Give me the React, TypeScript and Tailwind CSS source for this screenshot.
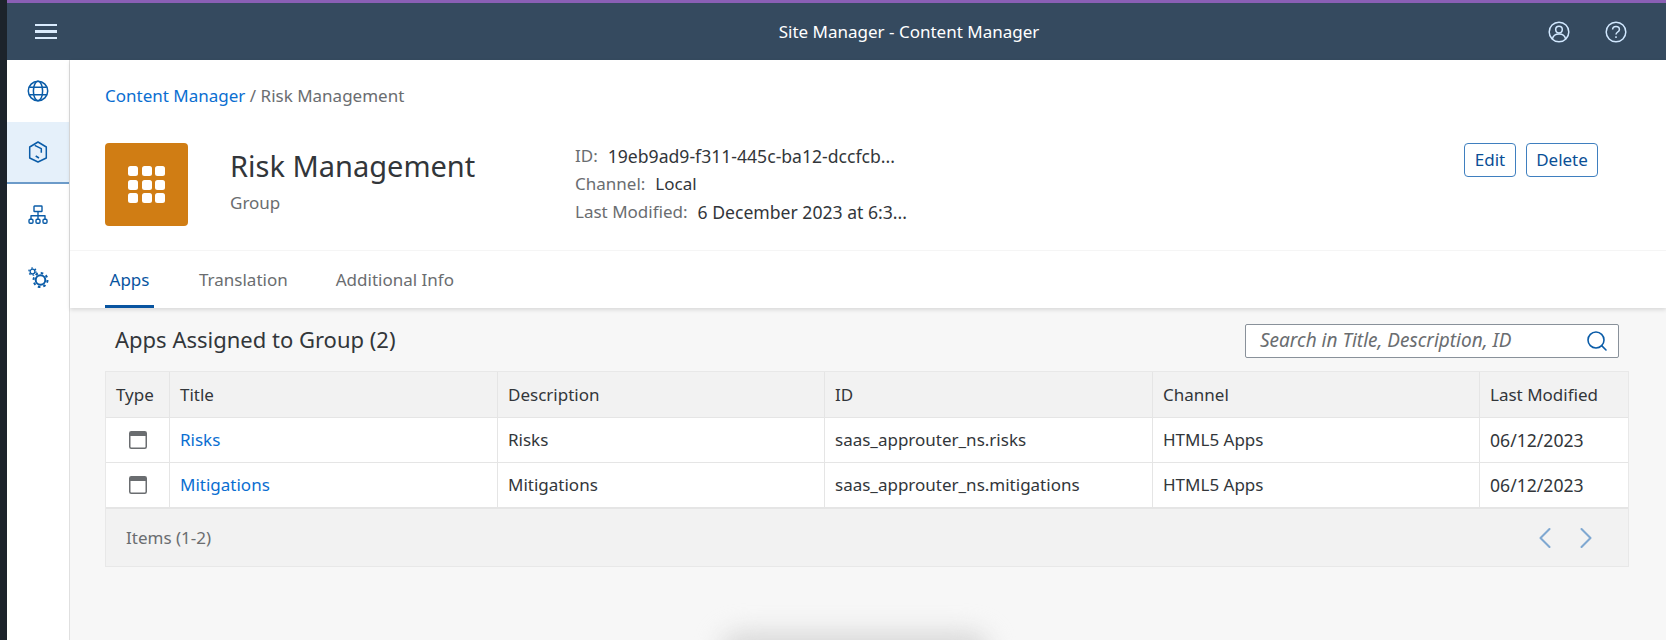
import { Search, ChevronLeft, ChevronRight } from 'lucide-react';

const columns = ['Type', 'Title', 'Description', 'ID', 'Channel', 'Last Modified'];

const apps = [
  { title: 'Risks', description: 'Risks', id: 'saas_approuter_ns.risks', channel: 'HTML5 Apps', modified: '06/12/2023' },
  { title: 'Mitigations', description: 'Mitigations', id: 'saas_approuter_ns.mitigations', channel: 'HTML5 Apps', modified: '06/12/2023' },
];

const gridCols = 'grid grid-cols-[63px_328px_327px_328px_327px_1fr]';

function GlobeIcon() {
  return (
    <svg width="24" height="24" viewBox="0 0 24 24" fill="none" stroke="#0a5ca8" strokeWidth="1.5">
      <circle cx="12" cy="12" r="9.7" />
      <ellipse cx="12" cy="12" rx="4.6" ry="9.7" />
      <path d="M3.2 8.2h17.6M3.2 15.8h17.6" />
    </svg>
  );
}

function CubeIcon() {
  return (
    <svg width="24" height="24" viewBox="0 0 24 24" fill="none" stroke="#0a5ca8" strokeWidth="1.5" strokeLinejoin="round">
      <path d="M12 2l8.3 5v11L12 22l-8.3-4V7z" />
      <path d="M8.7 5.3l6.6 3.4v4M9.7 16l3.3 2" />
    </svg>
  );
}

function HierarchyIcon() {
  return (
    <svg width="20" height="20" viewBox="0 0 20 20" fill="none" stroke="#0a5ca8" strokeWidth="1.4" strokeLinejoin="round">
      <rect x="6" y="1" width="8" height="5.5" rx="0.5" />
      <path d="M10 6.5V14M3 14v-3.2h14V14" />
      <rect x="1" y="14.2" width="4" height="4" rx="1.2" />
      <rect x="8" y="14.2" width="4" height="4" rx="1.2" />
      <rect x="15" y="14.2" width="4" height="4" rx="1.2" />
    </svg>
  );
}

function GearsIcon() {
  return (
    <svg width="24" height="24" viewBox="0 0 24 24" fill="none" stroke="#0a5ca8">
      <circle cx="6.5" cy="6.6" r="2.4" strokeWidth="1.3" />
      <circle cx="6.5" cy="6.6" r="3.6" strokeWidth="1.3" strokeDasharray="1.6 2.2" />
      <circle cx="14.5" cy="15" r="4.8" strokeWidth="2" />
      <circle cx="14.5" cy="15" r="7" strokeWidth="2" strokeDasharray="2.6 2.9" />
    </svg>
  );
}

function WindowIcon() {
  return (
    <svg width="18" height="18" viewBox="0 0 18 18" fill="none">
      <rect x="0.75" y="0.75" width="16.5" height="16.5" rx="1.5" stroke="#6a6d70" strokeWidth="1.5" />
      <rect x="1" y="1" width="16" height="4" fill="#6a6d70" />
    </svg>
  );
}

function UserIcon() {
  return (
    <svg width="22" height="22" viewBox="0 0 22 22" fill="none" stroke="#d1e8ff" strokeWidth="1.5">
      <circle cx="11" cy="11" r="9.8" />
      <circle cx="11" cy="8.6" r="3.3" />
      <path d="M4.4 18c.6-3.2 3-5 6.6-5s6 1.8 6.6 5" />
    </svg>
  );
}

function HelpIcon() {
  return (
    <svg width="22" height="22" viewBox="0 0 22 22" fill="none" stroke="#d1e8ff" strokeWidth="1.5">
      <circle cx="11" cy="11" r="9.8" />
      <path d="M7.6 8.6c0-2 1.5-3.2 3.4-3.2s3.4 1.2 3.4 3c0 2.6-3.4 2.6-3.4 5.2" />
      <path d="M11 15.2v1.8" />
    </svg>
  );
}

export default function App() {
  return (
    <div className="relative flex h-[640px] w-[1666px] overflow-hidden bg-[#f7f7f7] font-['Noto_Sans',sans-serif] text-[17px] text-[#32363a]">
      {/* dark window edge */}
      <div className="w-[7px] shrink-0 bg-[#1c232b]" />

      <div className="flex min-w-0 flex-1 flex-col">
        {/* Shell bar */}
        <header className="flex h-[60px] shrink-0 items-center justify-between border-t-[3px] border-[#8a5fb5] bg-[#354a5f] pr-[39px] pl-[28px] text-white">
          <div className="flex w-[22px] flex-col gap-[4px]">
            <span className="h-[2.5px] bg-[#d9ebfd]" />
            <span className="h-[2.5px] bg-[#d9ebfd]" />
            <span className="h-[2.5px] bg-[#d9ebfd]" />
          </div>
          <div className="ml-[213px] text-[17px]">Site Manager - Content Manager</div>
          <div className="flex items-center gap-[35px]">
            <UserIcon />
            <HelpIcon />
          </div>
        </header>

        <div className="flex min-h-0 flex-1">
          {/* Side nav */}
          <nav className="flex w-[63px] shrink-0 flex-col border-r border-[#e0e0e0] bg-white">
            <div className="flex h-[62px] items-center justify-center">
              <GlobeIcon />
            </div>
            <div className="flex h-[62px] items-center justify-center border-b-2 border-[#6c9bc9] bg-[#e5f0fa]">
              <CubeIcon />
            </div>
            <div className="flex h-[62px] items-center justify-center">
              <HierarchyIcon />
            </div>
            <div className="flex h-[62px] items-center justify-center">
              <GearsIcon />
            </div>
          </nav>

          <main className="flex min-w-0 flex-1 flex-col">
            {/* Object header */}
            <section className="z-10 bg-white shadow-[0_2px_4px_rgba(0,0,0,0.12)]">
              <div className="h-[191px] border-b border-[#f5f5f5] px-[35px] pt-[25px]">
                <div className="leading-[22px]">
                  <span className="text-[#0a6ed1]">Content Manager</span>
                  <span className="text-[#6a6d70]"> / Risk Management</span>
                </div>
                <div className="mt-[36px] flex">
                  <div className="flex h-[83px] w-[83px] shrink-0 items-center justify-center rounded-[4px] bg-[#d07d14]">
                    <div className="grid grid-cols-3 gap-[3.5px]">
                      {Array.from({ length: 9 }).map((_, i) => (
                        <span key={i} className="h-[10px] w-[10px] rounded-[2.5px] bg-white" />
                      ))}
                    </div>
                  </div>
                  <div className="ml-[42px] w-[345px]">
                    <h1 className="mt-[3px] text-[29px] leading-[40px]">Risk Management</h1>
                    <div className="mt-[6px] leading-[22px] text-[#6a6d70]">Group</div>
                  </div>
                  <dl className="mt-[2px] flex flex-col gap-[6px] leading-[22px]">
                    <div className="flex gap-[10px]">
                      <dt className="text-[#6a6d70]">ID:</dt>
                      <dd className="text-[17.6px]">19eb9ad9-f311-445c-ba12-dccfcb...</dd>
                    </div>
                    <div className="flex gap-[10px]">
                      <dt className="text-[#6a6d70]">Channel:</dt>
                      <dd>Local</dd>
                    </div>
                    <div className="flex gap-[10px]">
                      <dt className="text-[#6a6d70]">Last Modified:</dt>
                      <dd className="text-[17.6px]">6 December 2023 at 6:3...</dd>
                    </div>
                  </dl>
                  <div className="ml-auto mr-[33px] flex gap-[10px]">
                    <button className="h-[34px] w-[52px] rounded-[4px] border border-[#3f7fbf] bg-white text-[#0a4f96]">Edit</button>
                    <button className="h-[34px] w-[72px] rounded-[4px] border border-[#3f7fbf] bg-white text-[#0a4f96]">Delete</button>
                  </div>
                </div>
              </div>
              {/* Tabs */}
              <div className="flex h-[57px] gap-[45px] px-[35px]">
                <div className="flex w-[49px] items-center justify-center border-b-[3px] border-[#0854a0] pt-[3px] text-[#0854a0]">Apps</div>
                <div className="flex items-center text-[#6a6d70]">Translation</div>
                <div className="ml-[3px] flex items-center text-[#6a6d70]">Additional Info</div>
              </div>
            </section>

            {/* Apps table */}
            <section className="pr-[37px] pl-[35px]">
              <div className="flex h-[63px] items-center justify-between pt-[2px] pl-[10px]">
                <h2 className="mb-[3px] text-[22px] leading-[28px]">Apps Assigned to Group (2)</h2>
                <div className="mr-[10px] flex h-[34px] w-[374px] items-center justify-between rounded-[2px] border border-[#89919a] bg-white pr-[9px] pl-[14px]">
                  <span className="text-[19px] text-[#6a6d70] italic">Search in Title, Description, ID</span>
                  <Search size={24} strokeWidth={1.6} className="text-[#0a5ca8]" />
                </div>
              </div>

              <div className="border border-[#e8e8e8]">
                <div className={`${gridCols} h-[45px] bg-[#f2f2f2]`}>
                  {columns.map((col, i) => (
                    <div key={col} className={`flex items-center px-[10px] ${i > 0 ? 'border-l border-[#e5e5e5]' : ''}`}>
                      {col}
                    </div>
                  ))}
                </div>
                {apps.map((app) => (
                  <div key={app.id} className={`${gridCols} h-[45px] border-t border-[#e5e5e5] bg-white`}>
                    <div className="flex items-center justify-center">
                      <WindowIcon />
                    </div>
                    <div className="flex items-center border-l border-[#e5e5e5] px-[10px] text-[#0a6ed1]">{app.title}</div>
                    <div className="flex items-center border-l border-[#e5e5e5] px-[10px]">{app.description}</div>
                    <div className="flex items-center border-l border-[#e5e5e5] px-[10px]">{app.id}</div>
                    <div className="flex items-center border-l border-[#e5e5e5] px-[10px]">{app.channel}</div>
                    <div className="flex items-center border-l border-[#e5e5e5] px-[10px] text-[17.6px]">{app.modified}</div>
                  </div>
                ))}
                <div className="flex h-[59px] items-center justify-between border-t-2 border-[#e5e5e5] bg-[#f2f2f2] pr-[24px] pl-[20px]">
                  <span className="text-[#6a6d70]">Items (1-2)</span>
                  <div className="flex gap-[5px] text-[#7fa8d1]">
                    <ChevronLeft size={36} strokeWidth={1.4} />
                    <ChevronRight size={36} strokeWidth={1.4} />
                  </div>
                </div>
              </div>
            </section>
          </main>
        </div>
      </div>

      {/* blurred shadow at the bottom edge */}
      <div className="absolute bottom-[-36px] left-[720px] h-[44px] w-[270px] rounded-full bg-[#d8d8d8] blur-[12px]" />
    </div>
  );
}
